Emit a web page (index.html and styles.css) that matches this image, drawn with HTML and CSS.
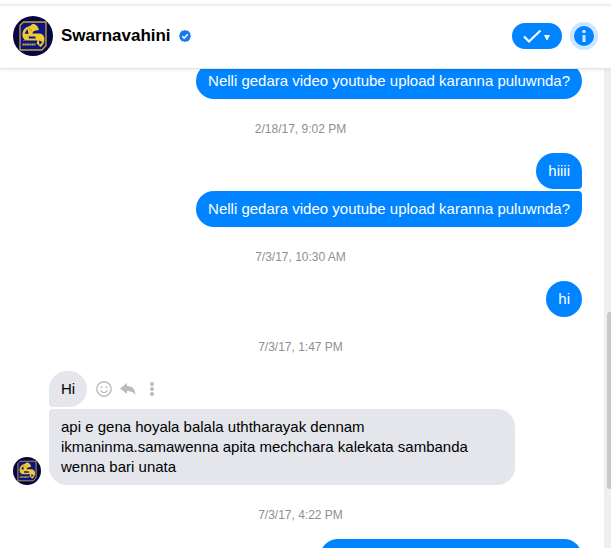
FILE: index.html
```html
<!DOCTYPE html>
<html lang="en">
<head>
    <meta charset="UTF-8">
    <meta name="viewport" content="width=device-width, initial-scale=1.0">
    <title>Swarnavahini</title>

    <link rel="stylesheet" href="styles.css">
</head>
<body>
    <svg class="defs" aria-hidden="true">
        <symbol id="logo" viewBox="0 0 40 40">
            <circle cx="20" cy="20" r="20" fill="#060640"/>
            <path d="M10.500 6H33v23.500L29 34H7V9.500z" fill="#0c1580" stroke="#c4a544" stroke-width="1.300" stroke-linejoin="round"/>
            <path d="M9.500 20c-.5-5 2-8.500 6-9.500 1.500-.4 2.500-1.500 4-2.500 3-.5 5.500 2 6.500 6l-3 .5c-2.500.3-3.500 1.500-3.500 3h6.500c3.500 0 5.500 2.500 5.500 5.500 0 3.500-1.500 6.500-4 8l-4-3.500 1-3H15c-3 0-5-1.500-5.500-4.500z" fill="#f0ca35"/>
            <path d="M11.500 17.500l3-4.500 1 5zM15.500 20.500h6.500l1 2h-7z" fill="#0c1580"/>
            <path d="M26 24.500l3.500 1.500-3 3z" fill="#0c1580"/>
            <path d="M16 12l3 3M10 24.500h3" fill="none" stroke="#9b7d20" stroke-width=".8"/>
            <path d="M9.500 28.500h13" stroke="#c4a544" stroke-width="2" stroke-dasharray="1.600 .3"/>
        </symbol>
    </svg>

    <header class="header">
        <svg class="avatar" role="img" aria-label="Swarnavahini"><use href="#logo"/></svg>
        <h1 class="name">Swarnavahini</h1>
        <svg class="verified" viewBox="0 0 12 12" role="img" aria-label="Verified">
            <path d="M6 0l1.500.7 1.700-.1.700 1.500 1.400.9-.1 1.600.8 1.400-.8 1.400.1 1.600-1.400.9-.7 1.500-1.700-.1L6 12l-1.500-.7-1.700.1-.7-1.500L.7 9l.1-1.600L0 6l.8-1.400L.7 3l1.400-.9.7-1.500 1.700.1z" fill="#1877f2"/>
            <path d="M3.300 6.200l1.900 1.900 3.600-3.800" fill="none" stroke="#fff" stroke-width="1.500"/>
        </svg>
        <button class="done" type="button" aria-label="Mark as done">
            <svg width="28" height="16" viewBox="0 0 28 16">
                <path d="M1 8.500l5 5L17.500 2.500" fill="none" stroke="#fff" stroke-width="2.200"/>
                <path d="M21 7h6l-2.500 5h-1z" fill="#fff"/>
            </svg>
        </button>
        <button class="info" type="button" aria-label="Conversation information">
            <svg width="20" height="20" viewBox="0 0 20 20">
                <circle cx="10" cy="10" r="10" fill="#0084ff"/>
                <circle cx="10" cy="5.500" r="1.800" fill="#cde6ff"/>
                <path d="M8.500 9H11.500V16H8.500z" fill="#cde6ff"/>
            </svg>
        </button>
    </header>

    <div class="main">
        <main class="thread">
            <div class="group sent">
                <div class="bubble">Nelli gedara video youtube upload karanna puluwnda?</div>
            </div>

            <time class="stamp">2/18/17, 9:02 PM</time>

            <div class="group sent">
                <div class="bubble">hiiii</div>
                <div class="bubble">Nelli gedara video youtube upload karanna puluwnda?</div>
            </div>

            <time class="stamp">7/3/17, 10:30 AM</time>

            <div class="group sent">
                <div class="bubble">hi</div>
            </div>

            <time class="stamp">7/3/17, 1:47 PM</time>

            <div class="received">
                <svg class="avatar small" role="img" aria-label="Swarnavahini"><use href="#logo"/></svg>
                <div class="group">
                    <div class="row">
                        <div class="bubble">Hi</div>
                        <div class="actions">
                            <button type="button" aria-label="React">
                                <svg width="16" height="16" viewBox="0 0 16 16">
                                    <circle cx="8" cy="8" r="7.200" fill="none" stroke="#b8bbbf" stroke-width="1.400"/>
                                    <circle cx="5.500" cy="6.300" r="1" fill="#b8bbbf"/>
                                    <circle cx="10.500" cy="6.300" r="1" fill="#b8bbbf"/>
                                    <path d="M4.500 9.500c1.500 2.800 5.500 2.800 7 0" fill="none" stroke="#b8bbbf" stroke-width="1.400"/>
                                </svg>
                            </button>
                            <button type="button" aria-label="Reply">
                                <svg width="16" height="16" viewBox="0 0 16 16">
                                    <path d="M0 7.500L7 2v3c5 0 8.500 3 8.500 9C13.500 11 11 10 7 10v3z" fill="#b8bbbf"/>
                                </svg>
                            </button>
                            <button type="button" aria-label="More">
                                <svg width="16" height="16" viewBox="0 0 16 16">
                                    <g fill="#b8bbbf">
                                        <circle cx="8" cy="3" r="2"/>
                                        <circle cx="8" cy="8" r="2"/>
                                        <circle cx="8" cy="13" r="2"/>
                                    </g>
                                </svg>
                            </button>
                        </div>
                    </div>
                    <div class="bubble">api e gena hoyala balala uththarayak dennam ikmaninma.samawenna apita mechchara kalekata sambanda wenna bari unata</div>
                </div>
            </div>

            <time class="stamp">7/3/17, 4:22 PM</time>

            <div class="group sent">
                <div class="bubble next"></div>
            </div>
        </main>
        <div class="scrollbar"><div class="thumb"></div></div>
    </div>
</body>
</html>
```

FILE: styles.css
```css
* {
    box-sizing: border-box;
}

body {
    margin: 0;
    height: 100vh;
    padding-top: 4px;
    display: flex;
    flex-direction: column;
    overflow: hidden;
    background: #fff;
    color: #000;
    font-family: "Liberation Sans", Helvetica, Arial, sans-serif;
    font-size: 15px;
    line-height: 20px;
}

button {
    padding: 0;
    border: none;
    background: none;
    cursor: pointer;
}

svg {
    display: block;
    flex: none;
}

.defs {
    position: absolute;
    width: 0;
    height: 0;
}

.header {
    z-index: 1;
    flex: none;
    height: 65px;
    padding: 0 13px 2px;
    display: flex;
    align-items: center;
    background: #fff;
    border-top: 1px solid #ececec;
    border-bottom: 1px solid #e4e4e4;
    box-shadow: 0 1px 3px rgba(0, 0, 0, 0.08), inset 0 2px 2px -1px rgba(0, 0, 0, 0.06);
}

.avatar {
    width: 40px;
    height: 40px;
}

.avatar.small {
    width: 28px;
    height: 28px;
}

.name {
    margin: 0 8px;
    font-size: 17px;
    font-weight: bold;
}

.verified {
    width: 12px;
    height: 12px;
}

.done {
    width: 50px;
    height: 26px;
    margin-left: auto;
    margin-right: 8px;
    display: flex;
    align-items: center;
    justify-content: center;
    border-radius: 13px;
    background: #0084ff;
}

.info {
    width: 28px;
    height: 28px;
    display: flex;
    align-items: center;
    justify-content: center;
    border-radius: 50%;
    background: #cce6ff;
}

.main {
    flex: 1;
    min-height: 0;
    display: flex;
}

.thread {
    flex: 1;
    min-width: 0;
    padding: 0 3px 0 0;
    overflow: hidden;
}

/* the thread is scrolled a little past its first message */
.thread > .group:first-child {
    margin-top: -6px;
}

.group {
    display: flex;
    flex-direction: column;
    align-items: flex-start;
    gap: 2px;
}

.sent {
    align-items: flex-end;
    padding-right: 19px;
}

.bubble {
    min-height: 36px;
    max-width: 466px;
    padding: 8px 12px;
    border-radius: 4px 18px 18px 4px;
    background: #e4e6eb;
}

.sent .bubble {
    border-radius: 18px 4px 4px 18px;
    background: #0084ff;
    color: #fff;
}

.group > :first-child.bubble,
.group > .row:first-child .bubble {
    border-top-left-radius: 18px;
}

.group > :last-child.bubble {
    border-bottom-left-radius: 18px;
}

.sent > :first-child.bubble {
    border-top-right-radius: 18px;
}

.sent > :last-child.bubble {
    border-bottom-right-radius: 18px;
}

.sent .next {
    width: 45%;
    max-width: 262px;
}

.stamp {
    display: block;
    padding: 22px 0 16px;
    color: #8d9095;
    font-size: 12px;
    line-height: 16px;
    text-align: center;
}

.received {
    padding-left: 13px;
    display: flex;
    align-items: flex-end;
    gap: 8px;
}

.row {
    display: flex;
    align-items: center;
}

.actions {
    margin-left: 9px;
    display: flex;
    gap: 8px;
}

.scrollbar {
    flex: none;
    width: 7px;
    padding-left: 3px;
    display: flex;
    flex-direction: column;
    background: #efefef;
}

.thumb {
    height: 37%;
    margin-top: 243px;
    border-radius: 3px 0 0 3px;
    background: #c8c8c8;
}
```
